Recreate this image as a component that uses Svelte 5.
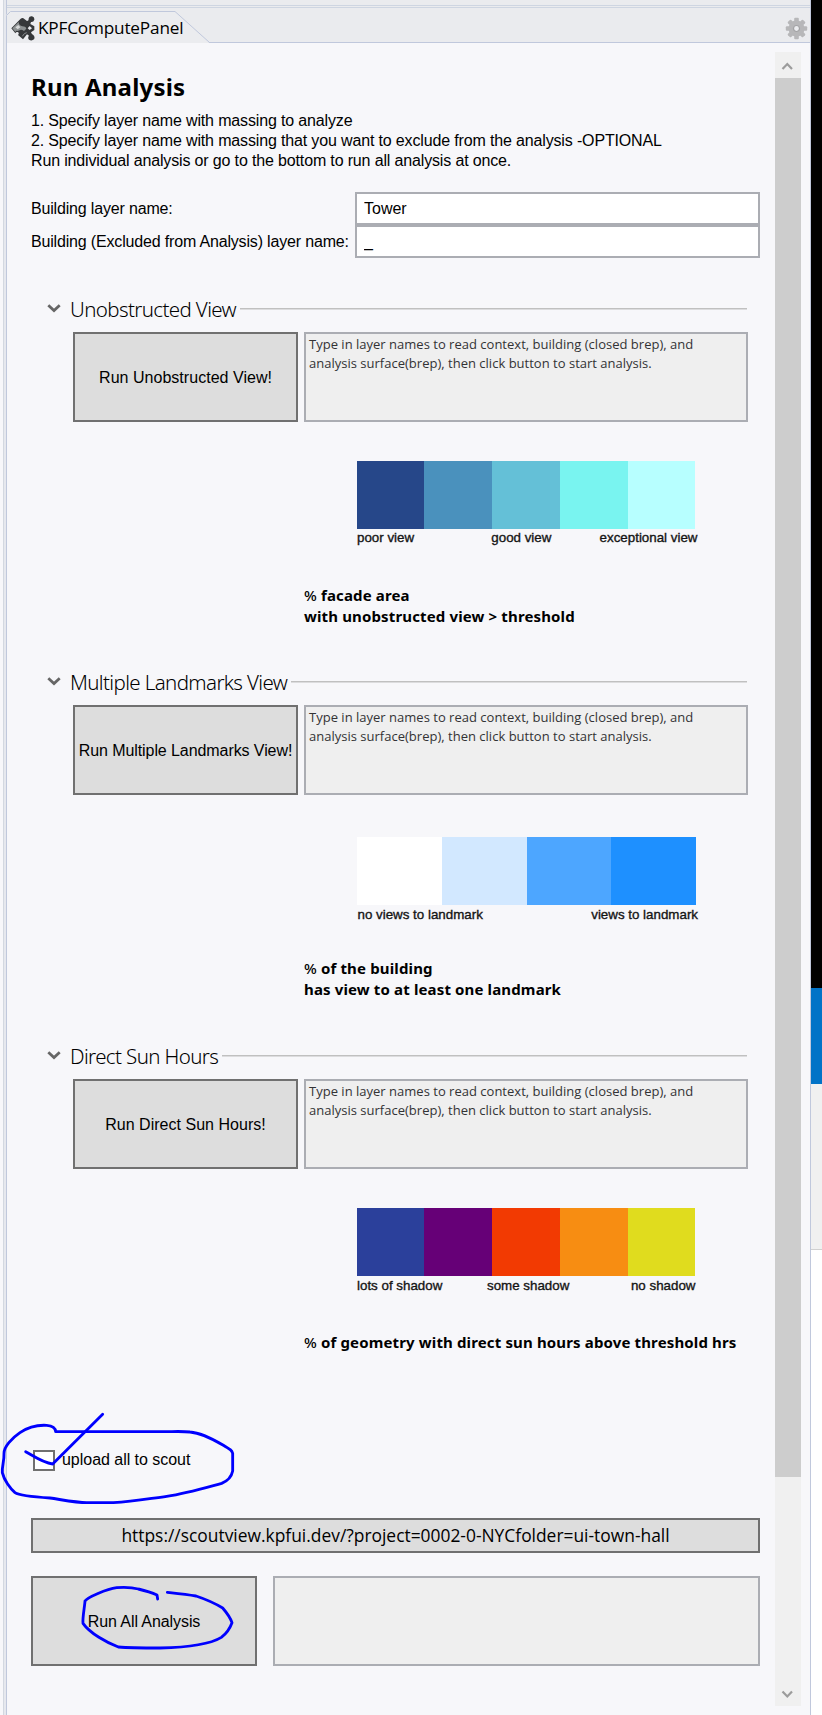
<script>
  const hint =
    'Type in layer names to read context, building (closed brep), and analysis surface(brep), then click button to start analysis.';

  const sections = [
    {
      id: 'view',
      title: 'Unobstructed View',
      action: 'Run Unobstructed View!',
      colors: ['#264789', '#4a91bd', '#64c0d7', '#79f4f0', '#b7ffff'],
      labels: ['poor view', 'good view', 'exceptional view'],
      note: ['facade area', 'with unobstructed view > threshold']
    },
    {
      id: 'landmarks',
      title: 'Multiple Landmarks View',
      action: 'Run Multiple Landmarks View!',
      colors: ['#ffffff', '#d2e8ff', '#4da6ff', '#1e90ff'],
      labels: ['no views to landmark', 'views to landmark'],
      note: ['of the building', 'has view to at least one landmark']
    },
    {
      id: 'sun',
      title: 'Direct Sun Hours',
      action: 'Run Direct Sun Hours!',
      colors: ['#2b409b', '#660077', '#f23a02', '#f78d12', '#e0dc1e'],
      labels: ['lots of shadow', 'some shadow', 'no shadow'],
      note: ['of geometry with direct sun hours above threshold hrs']
    }
  ];

  let tower = $state('Tower');
  let excluded = $state('_');
  let upload = $state(false);
</script>

<div class="window">
  <div class="edge"></div>
  <div class="dock">
    <header class="tabs">
      <div class="rails"></div>
      <svg class="tabshape" width="206" height="32" viewBox="0 0 206 32">
        <path d="M0 32V4L4 .5H169L203 31.5V32Z" fill="#ebecef" />
        <path d="M.5 32V4.500L4.500.5H169L203.500 31.500H206" fill="none" stroke="#c0c8dc" />
      </svg>
      <div class="tab">
        <svg width="24" height="25" viewBox="0 0 72 75">
          <path
            d="M1 37L29 8Q35 3 40 9L48 15Q54 14 53 7Q55 0 63 1Q71 3 70 11Q68 19 60 18L58 24L70 31V42L60 49Q62 56 67 57Q73 63 69 70Q62 76 54 71Q49 65 54 59L48 55L36 70L21 57Q26 51 20 48Q15 47 13 52Z"
            fill="#36383a"
          />
          <path d="M4 37L23 18Q24 29 34 31Q44 31 46 38L39 45Q30 39 26 43L20 45Q15 43 13 48Z" fill="#8d9192" />
          <path d="M13 34L22 27L28 34L20 40Z" fill="#d6d8d8" />
          <path d="M56 30L63 37L56 42L50 37Z" fill="#ebecef" />
          <path d="M34 61L40 53L47 50" fill="none" stroke="#8b8e90" stroke-width="3" />
        </svg>
        <span>KPFComputePanel</span>
      </div>
      <svg class="gear" width="23" height="23" viewBox="-11.500 -11.500 23 23">
        <g fill="#b7b7b9">
          {#each [0, 45, 90, 135] as a}
            <rect x="-2.300" y="-10.700" width="4.600" height="21.400" rx="1" transform="rotate({a})" />
          {/each}
          <circle r="8" />
        </g>
        <circle r="3" fill="#ebecef" stroke="#a2a2a4" stroke-width="1.200" />
      </svg>
    </header>

    <div class="body">
      <main>
        <h1>Run Analysis</h1>
        <div class="intro">
          <div>1. Specify layer name with massing to analyze</div>
          <div>2. Specify layer name with massing that you want to exclude from the analysis -OPTIONAL</div>
          <div>Run individual analysis or go to the bottom to run all analysis at once.</div>
        </div>

        <div class="fields">
          <label for="tower">Building layer name:</label>
          <input id="tower" type="text" bind:value={tower} />
          <label for="excluded">Building (Excluded from Analysis) layer name:</label>
          <input id="excluded" type="text" bind:value={excluded} />
        </div>

        {#each sections as s}
          <section class={s.id}>
            <h2>
              <svg width="14" height="9" viewBox="0 0 14 9">
                <path d="M1.300 1.300L7 6.500L12.700 1.300" fill="none" stroke="#666" stroke-width="2.800" />
              </svg>
              <span>{s.title}</span>
              <i></i>
            </h2>
            <div class="run">
              <button>{s.action}</button>
              <div class="log">{hint}</div>
            </div>
            <div class="legend">
              <div class="swatches">
                {#each s.colors as c}
                  <div style="background:{c}"></div>
                {/each}
              </div>
              <div class="names">
                {#each s.labels as l}
                  <span>{l}</span>
                {/each}
              </div>
            </div>
            <div class="note">
              <span class="pct">%</span>
              {#each s.note as line, i}
                {#if i > 0}<br />{/if}{line}
              {/each}
            </div>
          </section>
        {/each}

        <label class="upload">
          <input type="checkbox" bind:checked={upload} />
          <span>upload all to scout</span>
        </label>

        <button class="url">https://scoutview.kpfui.dev/?project=0002-0-NYCfolder=ui-town-hall</button>

        <div class="all">
          <button>Run All Analysis</button>
          <div class="log"></div>
        </div>
      </main>

      <div class="scroll">
        <svg width="26" height="26" viewBox="0 0 26 26">
          <path d="M7.500 17L12.300 12L17 17" fill="none" stroke="#9c9c9c" stroke-width="2.200" />
        </svg>
        <div class="thumb"></div>
        <svg width="26" height="26" viewBox="0 0 26 26">
          <path d="M7.500 11.500L12.300 16.500L17 11.500" fill="none" stroke="#9c9c9c" stroke-width="2.200" />
        </svg>
      </div>
    </div>
  </div>

  <aside>
    <div class="black"></div>
    <div class="blue"></div>
    <div class="gray"></div>
    <div class="white"></div>
  </aside>

  <svg class="ink" width="260" height="260" viewBox="0 0 780 780">
    <g fill="none" stroke="#0000fe" stroke-width="8.500" stroke-linecap="round" stroke-linejoin="round">
      <path
        d="M167 95C166 82 156 77 140 76C105 74 76 87 60 98C35 115 12 140 12 160C13 185 5 200 7 218C12 240 30 265 45 278C60 288 100 291 150 294C190 300 230 308 260 308H340C400 305 440 297 500 289C560 280 620 262 665 250C685 242 695 228 698 213V160C695 150 690 148 670 136C640 118 600 98 570 96C545 93 520 95 490 95H167"
      />
      <path d="M77 155C100 168 130 189 158 192L308 43" />
      <path
        d="M502 577C530 580 560 583 588 588C615 597 645 610 668 624C680 638 690 650 696 668C688 690 680 700 664 712C630 733 560 742 480 744C430 744 390 744 355 741C320 728 270 700 249 670C247 655 254 620 255 603C262 592 320 567 350 563C380 561 400 563 415 567C440 573 460 580 471 585L473 597"
      />
    </g>
  </svg>
</div>

<style>
  :global(body) {
    margin: 0;
    background: #f7f7fa;
  }
  .window {
    position: relative;
    display: grid;
    grid-template-columns: 6px 805px 11px;
    width: 822px;
    height: 1715px;
    overflow: hidden;
    color: #000;
    font: 16px/20px 'Liberation Sans', Arial, sans-serif;
    letter-spacing: -0.15px;
  }
  .edge {
    background: linear-gradient(90deg, #f7f7fa 3px, #d3d8e0 3px, #d3d8e0 4px, #e6e8ee 4px);
  }
  .dock {
    display: flex;
    flex-direction: column;
    box-sizing: border-box;
    background: #f7f7fa;
    border-left: 1px solid #c0c8dc;
    border-right: 1px solid #c0c8dc;
  }
  .tabs {
    position: relative;
    display: flex;
    justify-content: space-between;
    box-sizing: border-box;
    height: 43px;
    padding-top: 11px;
    background: #eaebee;
    border-bottom: 1px solid #c0c8dc;
  }
  .rails {
    position: absolute;
    top: 5px;
    left: 0;
    right: 0;
    height: 1px;
    border-top: 1px solid #ced5e1;
    border-bottom: 1px solid #ced5e1;
  }
  .tabshape {
    position: absolute;
    left: -1px;
    top: 11px;
  }
  .tab {
    position: relative;
    display: flex;
    padding: 5px 0 0 4px;
    font: 17.200px/26px 'Open Sans', sans-serif;
    letter-spacing: -0.18px;
  }
  .tab span {
    margin: -1px 0 0 3px;
  }
  .gear {
    margin: 6px 2px 0 0;
  }
  .body {
    display: flex;
    flex: 1;
    justify-content: space-between;
  }
  main {
    display: flex;
    flex-direction: column;
    width: 729px;
    padding: 28px 0 0 24px;
  }
  h1 {
    margin: 0;
    font: 700 24px/32px 'Noto Sans', sans-serif;
    letter-spacing: 0.2px;
  }
  .intro {
    margin-top: 8px;
  }
  .fields {
    display: grid;
    grid-template-columns: 324px 405px;
    margin-top: 21px;
    height: 66px;
    line-height: 34px;
  }
  .fields label {
    height: 33px;
    letter-spacing: -0.17px;
  }
  .fields input {
    box-sizing: border-box;
    width: 100%;
    height: 33px;
    padding: 0 7px;
    border: 2px solid #abadb3;
    border-radius: 0;
    background: #fff;
    color: #000;
    font: inherit;
    outline: none;
  }
  section {
    display: flex;
    flex-direction: column;
    height: 373px;
    margin-left: 17px;
  }
  .view {
    margin-top: 35px;
  }
  .landmarks {
    height: 374px;
  }
  .sun {
    height: 410px;
  }
  h2 {
    display: flex;
    margin: 0;
    width: 699px;
    height: 32px;
    font: 300 20.500px/33px 'Noto Sans', sans-serif;
    letter-spacing: -0.62px;
  }
  h2 svg {
    margin: 11px 9px 0 -1px;
  }
  h2 i {
    flex: 1;
    height: 1px;
    margin: 15px 0 0 4px;
    background: #c0c0c0;
    border-bottom: 1px solid #dcdcde;
  }
  .run {
    display: grid;
    grid-template-columns: 225px 444px;
    gap: 6px;
    height: 90px;
    margin: 7px 0 0 25px;
  }
  button {
    margin: 0;
    padding: 1px 0 0;
    background: #ddd;
    color: #000;
    border: 2px solid #707070;
    border-radius: 0;
    font: inherit;
    letter-spacing: -0.08px;
    white-space: nowrap;
  }
  .view button,
  .sun button {
    letter-spacing: 0.03px;
  }
  .log {
    box-sizing: border-box;
    padding: 1px 3px;
    background: #efefef;
    border: 2px solid #abadb3;
    color: #333335;
    font: 13px/19px 'Open Sans', sans-serif;
    letter-spacing: 0.010px;
  }
  .legend {
    box-sizing: border-box;
    width: 341px;
    height: 163px;
    margin-left: 308.500px;
    padding-top: 39px;
  }
  .landmarks .legend {
    margin-left: 309px;
    padding-top: 42px;
  }
  .sun .legend {
    width: 339px;
  }
  .swatches {
    display: flex;
    width: 339px;
    height: 68px;
  }
  .swatches div {
    flex: 1;
  }
  .names {
    display: flex;
    justify-content: space-between;
    padding-left: 0.5px;
    color: #141414;
    font-size: 13.350px;
    line-height: 17px;
    letter-spacing: 0;
    -webkit-text-stroke: 0.35px #141414;
  }
  .landmarks .names,
  .sun .names {
    line-height: 19px;
  }
  .view .names span:nth-child(2) {
    margin-left: 29px;
  }
  .sun .names span:nth-child(2) {
    margin-right: 17px;
  }
  .note {
    margin-left: 256px;
    font: 700 15px/21px 'Noto Sans', sans-serif;
    letter-spacing: 0.14px;
  }
  .pct {
    font-weight: 500;
  }
  .upload {
    display: flex;
    align-items: flex-start;
    height: 21px;
  }
  .upload input {
    appearance: none;
    box-sizing: border-box;
    width: 22px;
    height: 21px;
    margin: 0 7px 0 2px;
    background: #fff;
    border: 2px solid #707070;
  }
  .upload span {
    line-height: 19px;
    letter-spacing: -0.03px;
  }
  .url {
    height: 35px;
    margin-top: 47px;
    padding: 0;
    font: 17.400px/31px 'Open Sans', sans-serif;
    letter-spacing: 0;
  }
  .all {
    display: grid;
    grid-template-columns: 226px 487px;
    gap: 16px;
    height: 90px;
    margin-top: 23px;
  }
  .scroll {
    display: flex;
    flex-direction: column;
    justify-content: space-between;
    width: 26px;
    margin: 9px 9px 9px 0;
    background: #f0f0f0;
  }
  .thumb {
    height: 1399px;
    margin-bottom: auto;
    background: #cdcdcd;
  }
  aside {
    display: flex;
    flex-direction: column;
  }
  .black {
    height: 988px;
    background: #000;
  }
  .blue {
    height: 96px;
    background: #0173c7;
  }
  .gray {
    height: 165px;
    background: #f0f0f0;
    border-bottom: 1px solid #d0d0d0;
  }
  .white {
    flex: 1;
    background: #fff;
  }
  .ink {
    position: absolute;
    left: 0;
    top: 1400px;
    pointer-events: none;
  }
</style>
